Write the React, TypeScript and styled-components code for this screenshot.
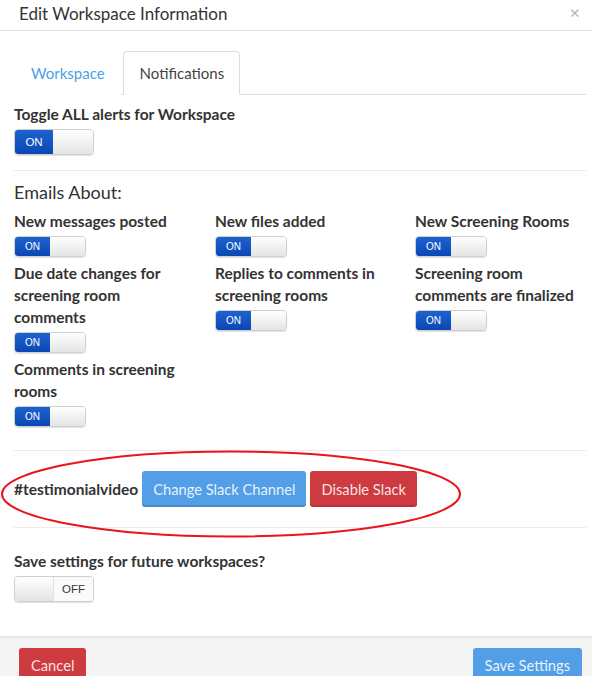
import React from 'react'
import styled, { createGlobalStyle } from 'styled-components'

const GlobalStyle = createGlobalStyle`
  html, body {
    margin: 0;
    padding: 0;
    background: #ffffff;
  }
  body {
    font-family: 'Lato', 'Liberation Sans', sans-serif;
    color: #333333;
  }
  * { box-sizing: border-box; }
`

const Modal = styled.div`
  width: 592px;
  height: 676px;
  display: flex;
  flex-direction: column;
  overflow: hidden;
  background: #fff;
`

const Header = styled.div`
  height: 36px;
  display: flex;
  align-items: flex-start;
  justify-content: space-between;
  padding: 3px 12px 0 19px;
  border-bottom: 1px solid #e3e3e3;
`

const Title = styled.h4`
  margin: 0;
  font-size: 17px;
  font-weight: 400;
  color: #333;
  line-height: 22px;
`

const Close = styled.span`
  font-size: 18px;
  line-height: 14px;
  color: #b3b3b3;
  margin-top: 2px;
`

const Body = styled.div`
  flex: 1;
  padding: 20px 6px 0 14px;
`

const TabBar = styled.div`
  display: flex;
  border-bottom: 1px solid #dddddd;
  height: 44px;
`

const Tab = styled.div<{ $active?: boolean }>`
  height: 44px;
  padding: 0 15px 0 16px;
  margin-right: 2px;
  display: flex;
  align-items: center;
  font-size: 15px;
  border: 1px solid ${p => (p.$active ? '#dddddd' : 'transparent')};
  border-bottom-color: ${p => (p.$active ? '#ffffff' : 'transparent')};
  border-radius: 4px 4px 0 0;
  background: #fff;
  color: ${p => (p.$active ? '#444' : '#4a9fe8')};
  margin-bottom: -1px;
`

const Section = styled.div<{ $pad?: string; $last?: boolean }>`
  padding: ${p => p.$pad || '0'};
  border-bottom: ${p => (p.$last ? 'none' : '1px solid #ebebeb')};
`

const Label = styled.div`
  font-size: 15.5px;
  font-weight: 700;
  line-height: 22px;
  color: #333;
`

const Heading = styled.div`
  font-size: 18px;
  line-height: 22px;
  color: #333;
  margin-bottom: 7px;
`

const Switch = styled.div<{ $small?: boolean }>`
  display: flex;
  width: ${p => (p.$small ? '72px' : '80px')};
  height: ${p => (p.$small ? '21px' : '26px')};
  border: 1px solid #cfcfcf;
  border-radius: 4px;
  overflow: hidden;
  box-shadow: 0 1px 1px rgba(0, 0, 0, 0.12);
  margin-top: 4px;
`

const OnHalf = styled.div<{ $small?: boolean }>`
  width: ${p => (p.$small ? '35px' : '38px')};
  display: flex;
  align-items: center;
  justify-content: center;
  font-size: ${p => (p.$small ? '10px' : '11.5px')};
  color: #ffffff;
  background: linear-gradient(#1d63cf, #0a47b5);
  font-family: 'Liberation Sans', sans-serif;
`

const Blank = styled.div`
  flex: 1;
  background: linear-gradient(#ffffff, #e4e4e4);
`

const OffHalf = styled.div`
  width: 40px;
  display: flex;
  align-items: center;
  justify-content: center;
  font-size: 11.5px;
  color: #333;
  background: #fafafa;
  border-left: 1px solid #e3e3e3;
  font-family: 'Liberation Sans', sans-serif;
`

const Grid = styled.div`
  display: grid;
  grid-template-columns: 201px 200px 1fr;
  align-items: start;
`

const Item = styled.div`
  max-width: 172px;
  padding-bottom: 5px;
`

const SlackRow = styled.div`
  position: relative;
  display: flex;
  align-items: center;
  height: 77px;
  border-bottom: 1px solid #ebebeb;
`

const Channel = styled.span`
  font-size: 15.5px;
  font-weight: 700;
  margin-right: 4px;
`

const Button = styled.button<{ $tone: 'blue' | 'red' }>`
  font-family: inherit;
  font-size: 14.7px;
  height: 36px;
  padding: 0 11px;
  border: none;
  border-radius: 3px;
  margin-right: 4px;
  color: rgba(255, 255, 255, 0.88);
  background: ${p => (p.$tone === 'blue' ? '#529fe8' : '#cd3a40')};
  box-shadow: inset 0 -2px 0 rgba(0, 0, 0, 0.12);
`

const Ellipse = styled.svg`
  position: absolute;
  left: -13px;
  top: -3px;
  pointer-events: none;
`

const Footer = styled.div`
  height: 40px;
  background: #f4f4f4;
  border-top: 2px solid #e6e6e6;
  display: flex;
  justify-content: space-between;
  align-items: flex-start;
  padding: 10px 10px 0 19px;
`

const FooterButton = styled(Button)`
  height: 34px;
  padding: 0 12px;
  margin: 0;
`

const OnSwitch = ({ small }: { small?: boolean }) => (
  <Switch $small={small}>
    <OnHalf $small={small}>ON</OnHalf>
    <Blank />
  </Switch>
)

const emails = [
  'New messages posted',
  'New files added',
  'New Screening Rooms',
  'Due date changes for screening room comments',
  'Replies to comments in screening rooms',
  'Screening room comments are finalized',
  'Comments in screening rooms',
]

const App: React.FC = () => (
  <>
    <GlobalStyle />
    <Modal>
      <Header>
        <Title>Edit Workspace Information</Title>
        <Close>×</Close>
      </Header>
      <Body>
        <TabBar>
          <Tab>Workspace</Tab>
          <Tab $active>Notifications</Tab>
        </TabBar>
        <Section $pad="8px 0 15px">
          <Label>Toggle ALL alerts for Workspace</Label>
          <OnSwitch />
        </Section>
        <Section $pad="10px 0 18px">
          <Heading>Emails About:</Heading>
          <Grid>
            {emails.map(text => (
              <Item key={text}>
                <Label>{text}</Label>
                <OnSwitch small />
              </Item>
            ))}
          </Grid>
        </Section>
        <SlackRow>
          <Channel>#testimonialvideo</Channel>
          <Button $tone="blue">Change Slack Channel</Button>
          <Button $tone="red">Disable Slack</Button>
          <Ellipse width="476" height="92" viewBox="0 0 476 92">
            <ellipse cx="230" cy="46" rx="229" ry="42.5" fill="none" stroke="#e8151b" strokeWidth="2" />
          </Ellipse>
        </SlackRow>
        <Section $pad="22px 0 34px" $last>
          <Label>Save settings for future workspaces?</Label>
          <Switch>
            <Blank />
            <OffHalf>OFF</OffHalf>
          </Switch>
        </Section>
      </Body>
      <Footer>
        <FooterButton $tone="red">Cancel</FooterButton>
        <FooterButton $tone="blue">Save Settings</FooterButton>
      </Footer>
    </Modal>
  </>
)

export default App
